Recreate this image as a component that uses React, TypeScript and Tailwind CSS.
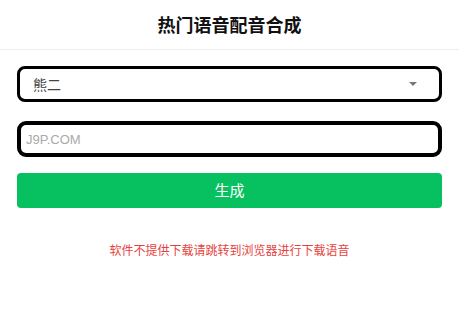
import { useState } from 'react'

const font = { fontFamily: '"Noto Sans CJK SC", "Noto Sans", sans-serif' }

export default function App() {
  const [voice, setVoice] = useState('熊二')
  const [text, setText] = useState('')

  return (
    <div className="min-h-screen w-full bg-white" style={font}>
      <div className="flex h-[50px] items-center justify-center border-b border-[#eeeeee]">
        <h1 className="text-[18px] font-bold text-[#111111]">热门语音配音合成</h1>
      </div>

      <div className="flex flex-col px-[17px] pt-[16px]">
        <div className="relative h-[36px]">
          <select
            value={voice}
            onChange={(e) => setVoice(e.target.value)}
            className="h-full w-full appearance-none rounded-[8px] border-[3px] border-black bg-white pl-[13px] text-[14px] text-[#444444] outline-none"
          >
            <option>熊二</option>
            <option>熊大</option>
            <option>光头强</option>
          </select>
          <span className="pointer-events-none absolute right-[25px] top-1/2 -translate-y-1/2 border-x-[4px] border-t-[4px] border-x-transparent border-t-[#777777]" />
        </div>

        <input
          value={text}
          onChange={(e) => setText(e.target.value)}
          placeholder="J9P.COM"
          className="mt-[19px] h-[36px] w-full rounded-[9px] border-[4px] border-black bg-white px-[5px] text-[13px] text-[#333333] outline-none placeholder:text-[#aaaaaa]"
          style={{ fontFamily: '"Liberation Sans", "Noto Sans CJK SC", sans-serif' }}
        />

        <button className="mt-[16px] h-[35px] w-full rounded-[4px] bg-[#07c160] text-[15px] text-white">
          生成
        </button>

        <p className="mt-[33px] text-center text-[12px] text-[#e64340]">
          软件不提供下载请跳转到浏览器进行下载语音
        </p>
      </div>
    </div>
  )
}
